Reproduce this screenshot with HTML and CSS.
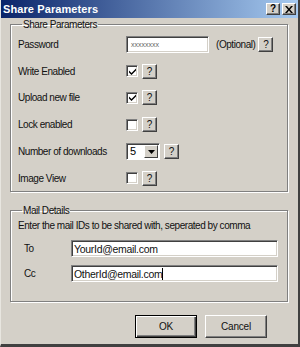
FILE: index.html
```html
<!DOCTYPE html>
<html>
<head>
<meta charset="utf-8">
<link rel="stylesheet" href="styles.css">
</head>
<body>
<div class="window">
  <div class="titlebar">
    <span class="title">Share Parameters</span>
    <div class="tbtns">
      <span class="tbtn">?</span>
      <span class="tbtn close">
        <svg width="8" height="7" viewBox="0 0 8 7"><path d="M0 0h2l2 2.5L6 0h2L5 3.5 8 7H6L4 4.5 2 7H0l3-3.5z" fill="#000"/></svg>
      </span>
    </div>
  </div>
  <div class="content">
    <fieldset class="group g1">
      <legend>Share Parameters</legend>
      <div class="row">
        <span class="label">Password</span>
        <span class="input pw">xxxxxxxx</span>
        <span class="opt">(Optional)</span>
        <span class="qbtn">?</span>
      </div>
      <div class="row">
        <span class="label">Write Enabled</span>
        <span class="check"><svg width="9" height="9" viewBox="0 0 9 9"><path d="M1 3.5l2.5 2.5L8 1.5v2L3.5 8 1 5.5z" fill="#000"/></svg></span>
        <span class="qbtn">?</span>
      </div>
      <div class="row">
        <span class="label">Upload new file</span>
        <span class="check"><svg width="9" height="9" viewBox="0 0 9 9"><path d="M1 3.5l2.5 2.5L8 1.5v2L3.5 8 1 5.5z" fill="#000"/></svg></span>
        <span class="qbtn">?</span>
      </div>
      <div class="row">
        <span class="label">Lock enabled</span>
        <span class="check"></span>
        <span class="qbtn">?</span>
      </div>
      <div class="row">
        <span class="label">Number of downloads</span>
        <span class="select"><span class="sval">5</span><span class="arrow"><svg width="7" height="4" viewBox="0 0 7 4"><path d="M0 0h7L3.5 4z" fill="#000"/></svg></span></span>
        <span class="qbtn">?</span>
      </div>
      <div class="row">
        <span class="label">Image View</span>
        <span class="check"></span>
        <span class="qbtn">?</span>
      </div>
    </fieldset>
    <fieldset class="group g2">
      <legend>Mail Details</legend>
      <div class="note">Enter the mail IDs to be shared with, seperated by comma</div>
      <div class="mrow">
        <span class="mlabel">To</span>
        <span class="input mail">YourId@email.com</span>
      </div>
      <div class="mrow">
        <span class="mlabel">Cc</span>
        <span class="input mail">OtherId@email.com<span class="caret"></span></span>
      </div>
    </fieldset>
    <div class="buttons">
      <span class="btn default">OK</span>
      <span class="btn">Cancel</span>
    </div>
  </div>
</div>
</body>
</html>
```
FILE: styles.css
```css
* { box-sizing: border-box; }
html, body { margin: 0; padding: 0; }
body {
  font-family: "Liberation Sans", Arial, sans-serif;
  font-size: 10px;
  letter-spacing: -0.45px;
  color: #111;
  background: #d4d0c8;
}
.window {
  width: 300px;
  height: 347px;
  background: #d4d0c8;
  border-left: 1px solid #e8e6e0;
  border-right: 2px solid #404040;
  border-bottom: 3px solid #404040;
  display: flex;
  flex-direction: column;
}
.titlebar {
  height: 18px;
  flex: none;
  background: linear-gradient(to right, #0a246a, #a6caf0);
  display: flex;
  align-items: center;
  justify-content: space-between;
  padding: 0 2px 0 2px;
}
.title {
  color: #fff;
  font-weight: bold;
  font-size: 11px;
  letter-spacing: 0.1px;
}
.tbtns { display: flex; gap: 2px; }
.tbtn {
  width: 14px;
  height: 12px;
  background: #d4d0c8;
  border: 1px solid;
  border-color: #fff #404040 #404040 #fff;
  box-shadow: inset -1px -1px 0 #808080;
  display: flex;
  align-items: center;
  justify-content: center;
  font-weight: bold;
  font-size: 10px;
  letter-spacing: 0;
  line-height: 1;
  color: #000;
}
.content {
  flex: 1;
  display: flex;
  flex-direction: column;
  padding: 0 10px 0 9px;
}
.group {
  margin: 0;
  padding: 0 0 0 7px;
  border: 1px solid #808080;
  box-shadow: 1px 1px 0 #fff, inset 1px 1px 0 #fff;
  min-width: 0;
  flex: none;
}
.group legend {
  padding: 0 1px;
  margin-left: 4px;
  line-height: 13px;
}
.row {
  height: 26.8px;
  display: flex;
  align-items: center;
}
.label {
  width: 108px;
  flex: none;
}
.input {
  background: #fff;
  border: 1px solid;
  border-color: #808080 #fff #fff #808080;
  box-shadow: inset 1px 1px 0 #404040, inset -1px -1px 0 #d4d0c8;
  height: 17px;
  display: flex;
  align-items: center;
  padding-left: 3px;
}
.pw {
  width: 83px;
  font-size: 7px;
  color: #666;
  letter-spacing: 0;
  padding-left: 4px;
}
.opt { margin-left: 7px; }
.qbtn {
  width: 15px;
  height: 15px;
  margin-left: 3px;
  border: 1px solid;
  border-color: #fff #404040 #404040 #fff;
  box-shadow: inset -1px -1px 0 #808080;
  display: flex;
  align-items: center;
  justify-content: center;
  font-size: 10px;
  letter-spacing: 0;
}
.check {
  width: 12px;
  height: 12px;
  background: #fff;
  border: 1px solid;
  border-color: #808080 #fff #fff #808080;
  box-shadow: inset 1px 1px 0 #404040, inset -1px -1px 0 #d4d0c8;
  display: flex;
  align-items: center;
  justify-content: center;
  margin-right: 1px;
}
.select {
  width: 34px;
  height: 17px;
  background: #fff;
  border: 1px solid;
  border-color: #808080 #fff #fff #808080;
  box-shadow: inset 1px 1px 0 #404040;
  display: flex;
  align-items: stretch;
  padding: 1px 1px 1px 2px;
  margin-right: 1px;
}
.sval { flex: 1; line-height: 13px; padding-left: 1px; font-size: 11px; letter-spacing: 0; color: #000; }
.arrow {
  width: 14px;
  background: #d4d0c8;
  border: 1px solid;
  border-color: #fff #404040 #404040 #fff;
  display: flex;
  align-items: center;
  justify-content: center;
}
.g1 { height: 174px; }
.g2 {
  margin-top: 12px;
  height: 98px;
  padding-left: 7px;
}
.note {
  height: 19px;
  padding-top: 2px;
  line-height: 14px;
}
.mrow {
  height: 25px;
  display: flex;
  align-items: center;
}
.mlabel {
  width: 53px;
  padding-left: 6px;
  flex: none;
}
.mail {
  width: 207px;
  height: 17px;
  padding-left: 2px;
  font-size: 10.5px;
  letter-spacing: -0.3px;
}
.caret {
  display: inline-block;
  width: 1px;
  height: 12px;
  background: #000;
}
.buttons {
  display: flex;
  justify-content: flex-end;
  gap: 8px;
  margin-top: 13px;
  padding-right: 21px;
}
.btn {
  width: 62px;
  height: 23px;
  border: 1px solid;
  border-color: #fff #404040 #404040 #fff;
  box-shadow: inset -1px -1px 0 #808080;
  display: flex;
  align-items: center;
  justify-content: center;
  font-size: 10px;
  letter-spacing: -0.2px;
}
.btn.default {
  border: 1px solid #000;
  box-shadow: inset 1px 1px 0 #fff, inset -1px -1px 0 #404040, inset -2px -2px 0 #808080;
}
```
